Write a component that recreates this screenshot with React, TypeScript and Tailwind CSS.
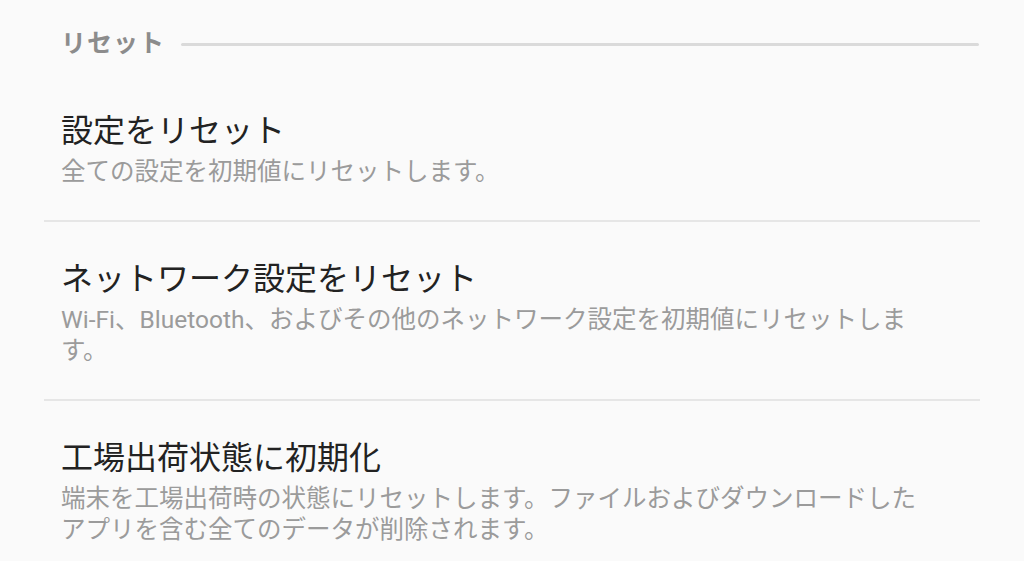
import React from 'react';

type ResetItem = {
  title: string;
  description: string;
};

const items: ResetItem[] = [
  {
    title: '設定をリセット',
    description: '全ての設定を初期値にリセットします。',
  },
  {
    title: 'ネットワーク設定をリセット',
    description: 'Wi-Fi、Bluetooth、およびその他のネットワーク設定を初期値にリセットします。',
  },
  {
    title: '工場出荷状態に初期化',
    description: '端末を工場出荷時の状態にリセットします。ファイルおよびダウンロードしたアプリを含む全てのデータが削除されます。',
  },
];

const ResetRow: React.FC<{ item: ResetItem; last: boolean }> = ({ item, last }) => (
  <div className={last ? 'pt-[35px] pb-[33px] pl-[17px]' : 'pt-[35px] pb-[33px] pl-[17px] border-b-2 border-[#e6e6e6]'}>
    <div className="text-[32px] leading-[44px] text-[#222222]">{item.title}</div>
    <div className="mt-[3px] w-[862px] text-[24.5px] leading-[31px] text-[#9b9b9b]">{item.description}</div>
  </div>
);

export default function App() {
  return (
    <div
      className="min-h-[561px] w-[1024px] bg-[#fafafa] overflow-hidden"
      style={{ fontFamily: 'Roboto, "Noto Sans CJK JP", sans-serif' }}
    >
      <div className="mx-[44px] pt-[30px]">
        {/* section header */}
        <div className="flex items-center pl-[17px] pr-[1px] h-[28px]">
          <span className="text-[25px] leading-[28px] font-bold tracking-[1px] text-[#8c8c8c]">リセット</span>
          <div className="ml-[16px] flex-1 h-[3px] rounded-full bg-[#dadada]" />
        </div>

        <div className="mt-[16px]">
          {items.map((item, i) => (
            <ResetRow key={item.title} item={item} last={i === items.length - 1} />
          ))}
        </div>
      </div>
    </div>
  );
}
